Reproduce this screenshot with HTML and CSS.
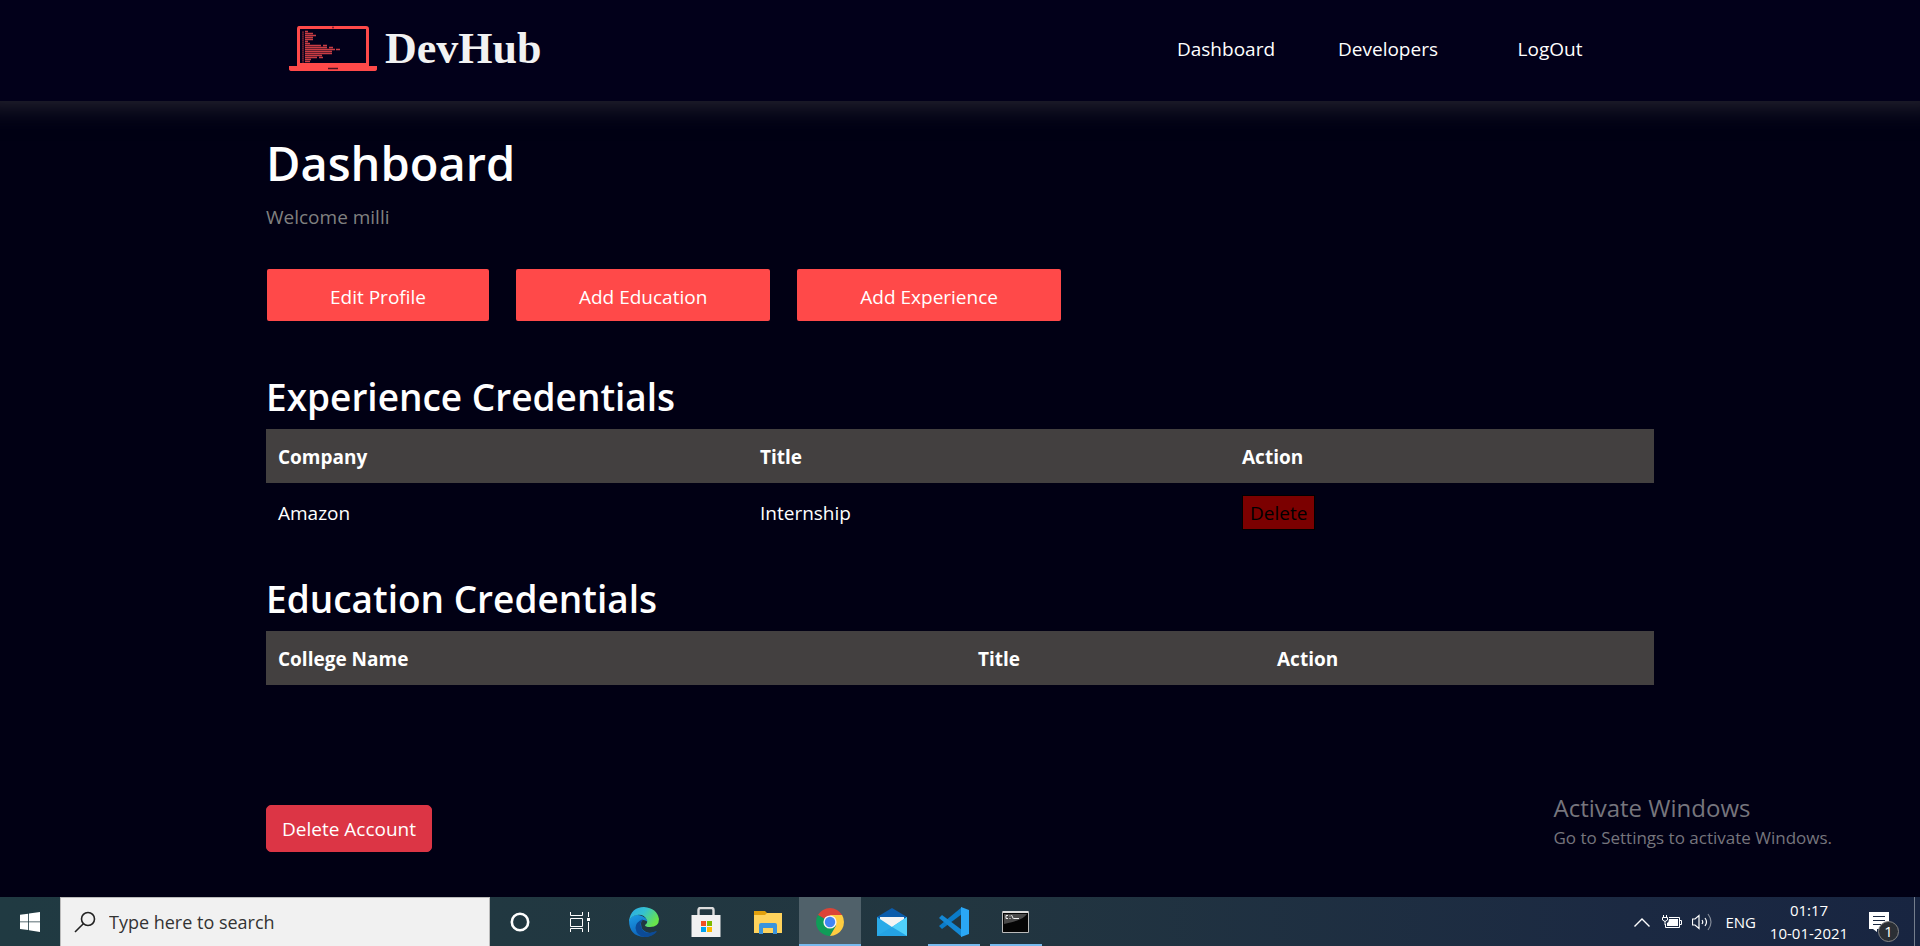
FILE: index.html
```html
<!DOCTYPE html>
<html lang="en">
<head>
<meta charset="utf-8">
<title>DevHub</title>
<link rel="stylesheet" href="styles.css">
</head>
<body>
<header class="site-header">
  <div class="header-inner">
    <a class="brand" href="#">
      <svg class="brand-icon" viewBox="0 0 88 46" aria-hidden="true">
        <path fill="#ff4949" fill-rule="evenodd" d="M10 1h67q3 0 3 3v37h8v3q0 2-3 2H3q-3 0-3-2v-3h8V4q0-3 2-3zM11 4v34h66V4z"/>
        <path d="M39 43.500h10" stroke="#4a1020" stroke-width="1.500"/>
        <circle cx="44" cy="2.500" r="1" fill="#801d2c"/>
        <g stroke="#c93c43" stroke-width="1.300">
          <path d="M14 6.500v31" stroke-dasharray="1.300 .7"/>
          <path d="M16 6.500h3M16 8.500h8M16 10.500h11M16 12.500h8M16 14.500h8M16 16.500h3M16 18.500h5M16 20.500h16M34 20.500h4M16 22.500h22M40 22.500h4M16 24.500h30M47 24.500h4M16 26.500h27M16 28.500h27M16 30.500h17M16 32.500h12M30 32.500h4M16 34.500h6M16 36.500h5"/>
        </g>
      </svg>
      <span>DevHub</span>
    </a>
    <nav class="main-nav">
      <a href="#">Dashboard</a>
      <a href="#">Developers</a>
      <a href="#">LogOut</a>
    </nav>
  </div>
</header>

<main class="page">
  <h1>Dashboard</h1>
  <p class="welcome">Welcome milli</p>
  <div class="actions">
    <a class="action" href="#">Edit Profile</a>
    <a class="action" href="#">Add Education</a>
    <a class="action" href="#">Add Experience</a>
  </div>

  <section class="experience">
    <h2>Experience Credentials</h2>
    <table>
      <colgroup><col class="company"><col class="position"><col></colgroup>
      <thead><tr><th scope="col">Company</th><th scope="col">Title</th><th scope="col">Action</th></tr></thead>
      <tbody><tr><td>Amazon</td><td>Internship</td><td><button class="delete" type="button">Delete</button></td></tr></tbody>
    </table>
  </section>

  <section class="education">
    <h2>Education Credentials</h2>
    <table>
      <colgroup><col class="college"><col class="degree"><col></colgroup>
      <thead><tr><th scope="col">College Name</th><th scope="col">Title</th><th scope="col">Action</th></tr></thead>
    </table>
  </section>

  <button class="delete-account" type="button">Delete Account</button>
</main>

<aside class="watermark">
  <div class="watermark-title">Activate Windows</div>
  <div>Go to Settings to activate Windows.</div>
</aside>

<footer class="taskbar">
  <button class="task" type="button" aria-label="Start">
    <svg width="20" height="20" viewBox="0 0 20 20" fill="#fff"><path d="M0 2.800L8.200 1.700v7.700H0zM9 1.500L20 0v9.400H9zM0 10.300h8.200V18L0 17zM9 10.300h11V20L9 18.300z"/></svg>
  </button>
  <label class="search">
    <svg width="22" height="22" viewBox="0 0 22 22" fill="none" stroke="#222" stroke-width="1.600"><circle cx="14" cy="8" r="6.500"/><path d="M9.300 12.700L1 21"/></svg>
    <input type="text" placeholder="Type here to search" aria-label="Search">
  </label>
  <button class="task" type="button" aria-label="Cortana">
    <svg width="20" height="20" viewBox="0 0 20 20"><circle cx="10" cy="10" r="8.200" fill="none" stroke="#fff" stroke-width="2.600"/></svg>
  </button>
  <button class="task" type="button" aria-label="Task View">
    <svg width="20" height="20" viewBox="0 0 20 20" fill="none" stroke="#fff"><path d="M.5 0v3.500h12V0M.5 6.500h12v8H.5zM.5 20v-3.500h12V20M18.500 0v5M18.500 10v10"/><path d="M17 6h3v3h-3z" fill="#fff" stroke="none"/></svg>
  </button>
  <div class="apps">
    <button class="app" type="button" aria-label="Edge">
      <svg width="30" height="30" viewBox="0 0 30 30">
        <defs>
          <linearGradient id="edge-top" x1="0" y1="0" x2="1" y2=".5"><stop offset="0" stop-color="#2aa8e8"/><stop offset=".5" stop-color="#35c1d0"/><stop offset="1" stop-color="#68e54b"/></linearGradient>
          <linearGradient id="edge-left" x1="0" y1="0" x2=".5" y2="1"><stop offset="0" stop-color="#1d9de5"/><stop offset="1" stop-color="#0b60b8"/></linearGradient>
        </defs>
        <path fill="url(#edge-left)" d="M0 13Q5 6 13 9q5 2 6 6-7-5-7 2 0 8 9 9l5-1q-4 5-11 5Q0 29 0 13z"/>
        <path fill="#0c4b97" d="M14 12q-4 4-1 10 4 7 14 2 1 0 .5 1-4 5-12 5-8-1-9-9 0-6 7.500-9z"/>
        <path fill="url(#edge-top)" d="M0 14Q2 0 15 0q13 1 15 12 0 8-9 8-5 0-5-2 3-2 2-5Q15 7 8 8 2 9 0 14z"/>
      </svg>
    </button>
    <button class="app" type="button" aria-label="Store">
      <svg width="30" height="30" viewBox="0 0 30 30"><path d="M7.500 9V3q0-2 2-2h11q2 0 2 2v6" fill="none" stroke="#ddd" stroke-width="2.400"/><path fill="#f1f1f1" d="M.5 8h29v22H.5z"/><path fill="#f25022" d="M10 14h5v5h-5z"/><path fill="#7fba00" d="M16 14h5v5h-5z"/><path fill="#00a4ef" d="M10 20h5v5h-5z"/><path fill="#ffb900" d="M16 20h5v5h-5z"/></svg>
    </button>
    <button class="app" type="button" aria-label="File Explorer">
      <svg width="28" height="24" viewBox="0 0 28 24"><path fill="#e2a00c" d="M0 1h11l2 2v5H0z"/><path fill="#ffd35c" d="M0 5h11l2-2h15v20H0z"/><path fill="#3a94dc" d="M5 24V15q0-2 2-2h14q2 0 2 2v9h-4v-6H9v6z"/></svg>
    </button>
    <button class="app active" type="button" aria-label="Chrome">
      <svg width="28" height="28" viewBox="0 0 28 28"><path fill="#db4437" d="M14 14L1.900 7A14 14 0 0 1 26.100 7z"/><path fill="#0f9d58" d="M14 14L1.900 7A14 14 0 0 0 14 28l6-10.500z"/><path fill="#ffcd40" d="M14 7h12.100A14 14 0 0 1 14 28l6.100-10.500z"/><circle cx="14" cy="14" r="6.600" fill="#f4f4f4"/><circle cx="14" cy="14" r="5.200" fill="#4285f4"/></svg>
    </button>
    <button class="app" type="button" aria-label="Mail">
      <svg width="30" height="28" viewBox="0 0 30 28"><path fill="#0b5cab" d="M0 9L15 0l15 9v6H0z"/><path fill="#f4f4f4" d="M3 9h24v10H3z"/><path fill="#2aaae8" d="M0 9l15 10L30 9v19H0z"/><path fill="#50d0fa" d="M30 9v19L15 19z"/><path fill="#1e9be0" d="M0 28l15-9 15 9z" opacity=".5"/></svg>
    </button>
    <button class="app open" type="button" aria-label="Visual Studio Code">
      <svg width="30" height="30" viewBox="0 0 30 30"><path fill="#0a7bc8" d="M0 19l3 3 20-15V0L0 19z"/><path fill="#1488d4" d="M0 11l3-3 20 15v7L0 11z"/><path fill="#2aa7f5" d="M22 0l8 3v24l-8 3V0z"/></svg>
    </button>
    <button class="app open" type="button" aria-label="Command Prompt">
      <svg width="28" height="24" viewBox="0 0 28 24"><path fill="#050505" stroke="#bbb" d="M.5 1.500h26v21H.5z"/><path fill="#777" d="M2 4h23Q20 11 2 14z" opacity=".6"/><path d="M1 2h25" stroke="#ddd" stroke-width="2"/><path d="M6 5.500H4v3h2M8 5.500v1M8 8v1M9.500 5l2 4M12 8.500h5" stroke="#eee" fill="none"/></svg>
    </button>
  </div>
  <div class="tray">
    <svg width="16" height="9" viewBox="0 0 16 9" fill="none" stroke="#fff" stroke-width="1.400"><path d="M.5 8.500L8 1l7.500 7.500"/></svg>
    <svg class="battery" width="20" height="14" viewBox="0 0 20 14"><path fill="none" stroke="#fff" d="M7 2.500h10.500v10h-14V9M18 5.500h1.500v4H18"/><path fill="#fff" d="M7 4h9v7H5V8q2-1 2-4z"/><path fill="none" stroke="#fff" d="M1.500 0v2M4.500 0v2M.5 2.500h5V5Q3 8 .5 5zM3 6v4"/></svg>
    <svg class="speaker" width="21" height="18" viewBox="0 0 21 18" fill="none" stroke="#fff" stroke-width="1.200"><path d="M.5 6v6H3l4 3.500v-13L3 6zM10 7q1.500 2 0 4M13 5q3 4 0 8"/><path d="M16 1q6 8 0 16" opacity=".45"/></svg>
    <span class="language">ENG</span>
    <div class="clock"><span>01:17</span><span>10-01-2021</span></div>
    <div class="notifications">
      <svg width="20" height="20" viewBox="0 0 20 20"><path fill="#fff" d="M0 0h20v17H8v3l-4-3H0z"/><path stroke="#1b2942" d="M4 4.500h12M4 8.500h12M4 12.500h8"/></svg>
      <span class="badge">1</span>
    </div>
  </div>
</footer>
</body>
</html>
```
FILE: styles.css
```css
* { box-sizing: border-box; }

body {
  position: relative;
  display: flex;
  flex-direction: column;
  min-height: 100vh;
  margin: 0;
  overflow-x: hidden;
  background: #010014;
  color: #fff;
  font-family: "Open Sans", "Noto Sans", sans-serif;
  font-size: 19px;
  line-height: 30px;
}

a { color: inherit; text-decoration: none; }
button, input { font: inherit; }

.site-header {
  background: #02001a;
  box-shadow: 0 -20px 24px 24px #2a2833;
}

.header-inner {
  display: flex;
  align-items: center;
  justify-content: space-between;
  width: 1342px;
  max-width: 100%;
  height: 101px;
  margin: 0 auto;
  padding-bottom: 4px;
}

.brand {
  display: flex;
  align-items: center;
  gap: 8px;
  color: #f2f2f2;
  font-family: "Liberation Serif", serif;
  font-size: 44px;
  font-weight: 700;
  line-height: 50px;
}

.brand-icon { width: 88px; height: 46px; margin-bottom: 2px; }

.main-nav {
  display: flex;
  text-align: center;
}

.main-nav a { width: 162px; }

.page {
  width: 1388px;
  max-width: 100%;
  margin: 0 auto;
  padding: 32px 0 45px;
}

h1, h2 { margin: 0; font-weight: 600; }
h1 { font-size: 47px; line-height: 60px; }
h2 { font-size: 37px; line-height: 48px; }

.welcome { margin: 9px 0 37px; color: #808080; }

.actions { display: flex; gap: 27px; padding-left: 1px; }

.action {
  padding: 13px 63px 9px;
  border-radius: 2px;
  background: #ff4949;
}

.experience { padding-top: 52px; }
.education { padding-top: 33px; }

table {
  width: 100%;
  margin-top: 8px;
  border-collapse: collapse;
  table-layout: fixed;
  text-align: left;
}

.company, .position { width: 482px; }
.college { width: 700px; }
.degree { width: 299px; }

th { padding: 13px 12px 11px; background: #434040; font-weight: 700; }
td { padding: 12px; }

.delete {
  display: block;
  padding: 2px 7px 1px;
  border: 1px solid #000;
  background: #7b0000;
  color: #000;
}

.delete-account {
  display: block;
  margin-top: 120px;
  padding: 8px 15px 7px;
  border: 1px solid #dc3545;
  border-radius: 5px;
  background: #dc3545;
  color: #fff;
}

.watermark {
  position: absolute;
  right: 88px;
  bottom: 94px;
  color: #76757d;
  font-size: 17px;
  line-height: 30px;
}

.watermark-title { font-size: 24px; }

.taskbar {
  display: flex;
  height: 50px;
  margin-top: auto;
  background: linear-gradient(90deg, #203a42, #223640 50%, #1b2942 85%, #182541);
}

.task, .app {
  display: grid;
  place-items: center;
  width: 60px;
  padding: 0;
  border: 0;
  background: none;
}

.app { position: relative; width: 62px; }
.apps { display: flex; padding-left: 3px; }
.active { background: #50616a; }

.active::after, .open::after {
  content: "";
  position: absolute;
  right: 5px;
  bottom: 0;
  left: 5px;
  height: 3px;
  background: #76b9ed;
}

.active::after { right: 0; left: 0; }

.search {
  display: flex;
  align-items: center;
  gap: 13px;
  width: 430px;
  padding-left: 13px;
  border: 1px solid #bbb;
  background: #f1f1f1;
}

.search input {
  flex: 1;
  min-width: 0;
  padding: 0;
  border: 0;
  background: none;
  font-size: 18px;
}

.search input::placeholder { color: #333; opacity: 1; }

.tray {
  display: flex;
  align-items: center;
  margin-left: auto;
  padding-right: 25px;
  border-right: 1px solid #747e8d;
  margin-right: 5px;
  font-size: 15px;
}

.battery { margin-left: 12px; }
.speaker { margin-left: 10px; }
.language { margin-left: 12px; }

.clock {
  display: flex;
  flex-direction: column;
  width: 106px;
  line-height: 23px;
  text-align: center;
}

.notifications {
  position: relative;
  display: grid;
  margin-left: 7px;
}

.badge {
  position: absolute;
  top: 9px;
  left: 9px;
  width: 21px;
  height: 21px;
  border: 1px solid #858585;
  border-radius: 50%;
  background: #2b2f35;
  line-height: 19px;
  text-align: center;
}
```
